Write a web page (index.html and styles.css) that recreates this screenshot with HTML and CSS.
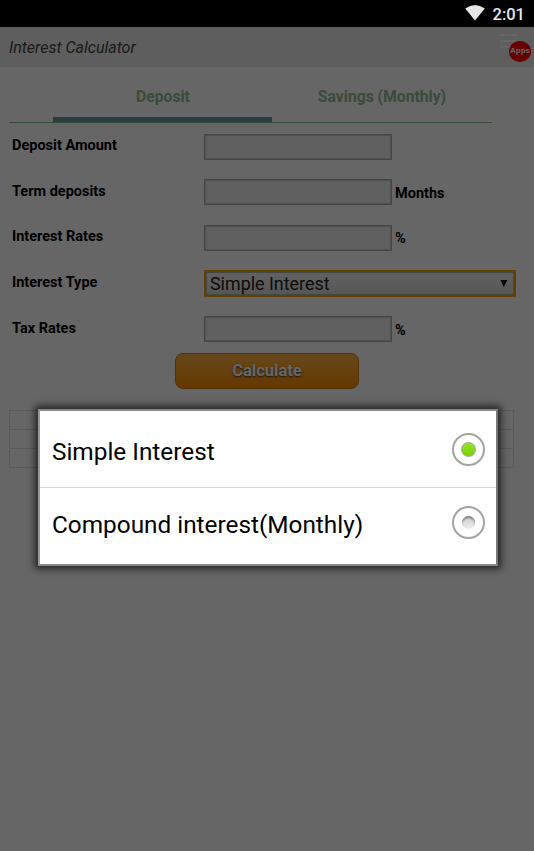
FILE: index.html
```html
<!DOCTYPE html>
<html lang="en">
<head>
  <meta charset="UTF-8">
  <meta name="viewport" content="width=device-width, initial-scale=1.0">
  <title>Interest Calculator</title>
  <link rel="stylesheet" href="styles.css">
</head>
<body>
  <div class="status-bar">
    <svg class="wifi" width="20" height="16" viewBox="0 0 20 16">
      <path d="M10 15.5 L0.2 3.6 Q10 -3.4 19.8 3.6 Z" fill="#fff"/>
    </svg>
    <span class="clock">2:01</span>
  </div>

  <div class="screen">
    <header class="app-header">
      <h1>Interest Calculator</h1>
      <div class="menu">
        <span class="menu-line"></span>
        <span class="menu-line"></span>
        <span class="menu-line"></span>
        <span class="menu-badge">Apps</span>
      </div>
    </header>

    <main class="app-main">
      <nav class="tabs">
        <a class="tab tab-active">Deposit</a>
        <a class="tab">Savings (Monthly)</a>
      </nav>

      <form class="calc-form">
        <div class="form-row">
          <label for="amount">Deposit Amount</label>
          <input type="text" id="amount">
        </div>
        <div class="form-row">
          <label for="term">Term deposits</label>
          <input type="text" id="term">
          <span class="unit">Months</span>
        </div>
        <div class="form-row">
          <label for="rate">Interest Rates</label>
          <input type="text" id="rate">
          <span class="unit">%</span>
        </div>
        <div class="form-row">
          <label>Interest Type</label>
          <div class="select">
            <span>Simple Interest</span>
            <svg width="8" height="8" viewBox="0 0 8 8"><path d="M0.3 0 H7.3 L3.8 7 Z"/></svg>
          </div>
        </div>
        <div class="form-row">
          <label for="tax">Tax Rates</label>
          <input type="text" id="tax">
          <span class="unit">%</span>
        </div>
        <button type="button" class="btn">Calculate</button>
      </form>

      <div class="result-table">
        <div class="result-row"></div>
        <div class="result-row"></div>
        <div class="result-row"></div>
      </div>
    </main>

    <div class="overlay"></div>

    <!-- Option picker -->
    <div class="dialog">
      <div class="option">
        <span>Simple Interest</span>
        <span class="radio radio-checked"></span>
      </div>
      <div class="option">
        <span>Compound interest(Monthly)</span>
        <span class="radio"></span>
      </div>
    </div>
  </div>
</body>
</html>
```
FILE: styles.css
```css
* {
  margin: 0;
  padding: 0;
  box-sizing: border-box;
  font-family: Roboto, sans-serif;
}

body {
  background-color: #fff;
  color: #000;
  height: 851px;
  overflow: hidden;
}

/* Status bar */
.status-bar {
  display: flex;
  justify-content: flex-end;
  align-items: center;
  gap: 8px;
  height: 27px;
  padding-right: 9px;
  background-color: #000;
  color: #e6e6e6;
}

.wifi {
  opacity: 0.9;
  margin-top: -1px;
}

.clock {
  font-size: 16.5px;
  font-weight: 500;
  line-height: 27px;
  padding-top: 2px;
}

.screen {
  position: relative;
  height: 824px;
}

/* Header */
.app-header {
  display: flex;
  justify-content: space-between;
  height: 40px;
  padding-left: 9px;
  background-color: #ebebeb;
}

.app-header h1 {
  font-size: 16px;
  font-weight: 400;
  font-style: italic;
  line-height: 42px;
  color: #444;
}

.menu {
  position: relative;
  display: flex;
  flex-direction: column;
  gap: 4px;
  width: 34px;
  padding-top: 7px;
}

.menu-line {
  width: 17px;
  height: 2px;
  background-color: #fff;
}

.menu-badge {
  position: absolute;
  top: 14px;
  left: 9px;
  width: 22px;
  height: 21px;
  border-radius: 50%;
  background-color: #ff0000;
  color: #fff;
  font-family: "Liberation Sans", sans-serif;
  font-size: 8px;
  font-weight: 700;
  line-height: 20px;
  text-align: center;
}

/* Tabs */
.tabs {
  display: flex;
  width: 483px;
  height: 56px;
  margin-left: 9px;
  padding-left: 44px;
  border-bottom: 1px solid #8fbc8f;
}

.tab {
  width: 219px;
  height: 55px;
  padding-left: 1px;
  font-size: 15.7px;
  font-weight: 700;
  line-height: 59px;
  text-align: center;
  color: #8fbc8f;
}

.tab-active {
  border-bottom: 5px solid #5f9ea0;
}

/* Form */
.calc-form {
  padding: 1px 0 0 12px;
}

.form-row {
  display: flex;
  align-items: center;
  height: 45.6px;
  font-size: 14.5px;
  font-weight: 700;
}

.form-row label {
  width: 192px;
  padding-bottom: 2px;
}

.form-row input {
  width: 188px;
  height: 26px;
  border: 1px solid #b0b0b0;
  box-shadow: inset 0 0 0 1px #c8c8c8;
  background-color: #f0f0f0;
}

.unit {
  margin-left: 3px;
  padding-top: 2px;
}

.select {
  display: flex;
  justify-content: space-between;
  align-items: center;
  width: 312px;
  height: 27px;
  padding: 0 6px 0 4px;
  border: 2px solid #f5a000;
  border-radius: 1px;
  background: linear-gradient(#f5f5f5, #d6d6d6);
  box-shadow: inset 0 0 0 1px #b0b0b0;
  color: #222;
  font-size: 17.9px;
  font-weight: 400;
}

.btn {
  display: block;
  width: 184px;
  height: 36px;
  margin: 1px 0 0 163px;
  border: 1px solid #c47a10;
  border-radius: 8px;
  background: linear-gradient(#ffb347, #ff8c00);
  color: #fff;
  font-size: 16.5px;
  font-weight: 700;
  text-shadow: 0 1px 2px #333;
}

/* Results */
.result-table {
  width: 505px;
  margin: 21px 0 0 9px;
  border: 1px solid #e2e2e2;
}

.result-row {
  height: 19px;
  border-bottom: 1px solid #e2e2e2;
}

.result-row:last-child {
  height: 18px;
  border-bottom: none;
}

.overlay {
  position: absolute;
  inset: 0;
  background-color: rgba(0, 0, 0, 0.6);
}

/* Dialog */
.dialog {
  position: absolute;
  top: 382px;
  left: 38px;
  width: 460px;
  height: 157px;
  border: 2px solid #999;
  border-color: #888 #777 #888 #999;
  background-color: #fff;
  box-shadow: 0 0 7px 3px rgba(0, 0, 0, 0.65);
}

.option {
  display: flex;
  justify-content: space-between;
  align-items: center;
  height: 77px;
  padding: 5px 11px 0 12px;
  font-size: 24.35px;
}

.option:first-child {
  border-bottom: 1px solid #d6d6d6;
}

.option:last-child {
  height: 73px;
  padding-top: 0;
}

.radio {
  display: flex;
  justify-content: center;
  align-items: center;
  width: 33px;
  height: 33px;
  margin-bottom: 5px;
  border: 2px solid #a3a3a3;
  border-radius: 50%;
}

.radio::after {
  content: "";
  width: 13px;
  height: 13px;
  border-radius: 50%;
  background: linear-gradient(#cfcfcf, #ececec);
  box-shadow: inset 0 2px 2px rgba(0, 0, 0, 0.4);
}

.radio-checked::after {
  border: 1px solid #a3a3a3;
  background: linear-gradient(#92e51f, #7bd008);
  box-shadow: none;
}
```
